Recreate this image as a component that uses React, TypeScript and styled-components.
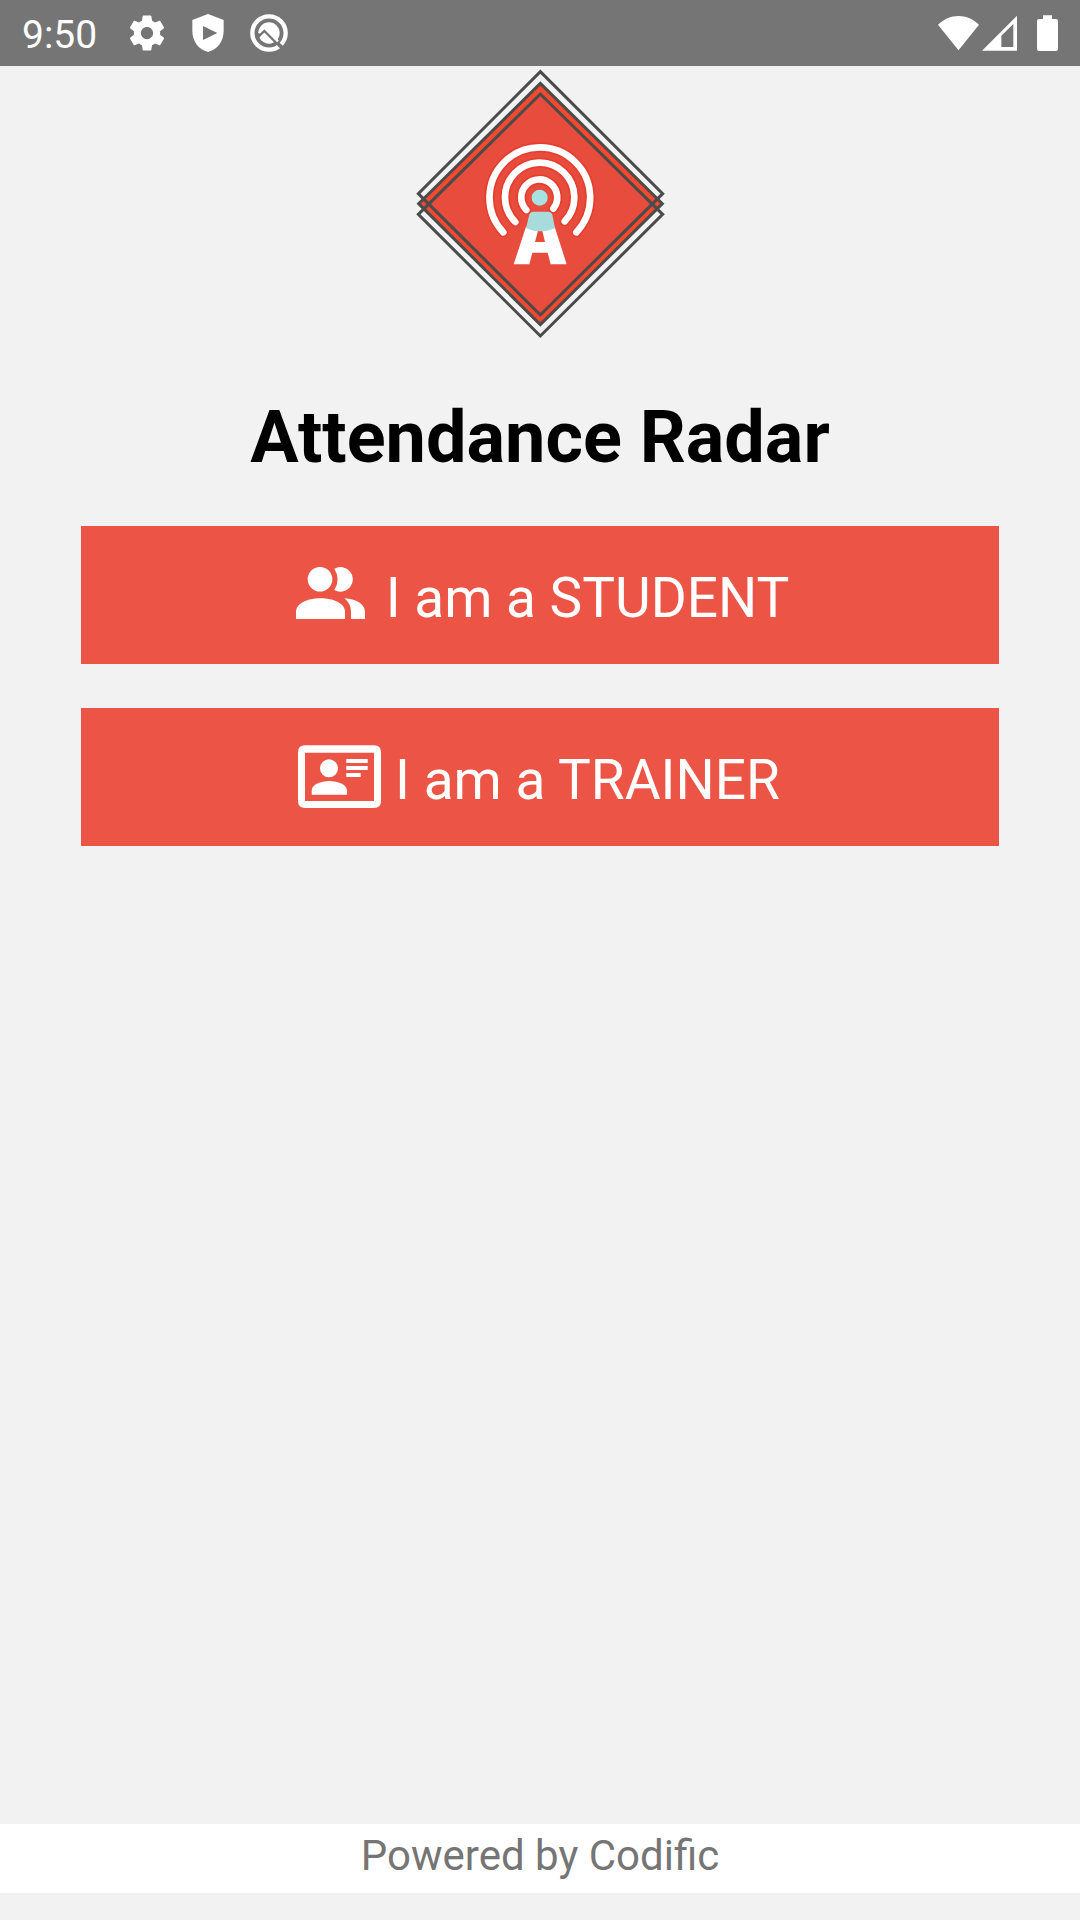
import React from "react";
import styled, { createGlobalStyle } from "styled-components";

const GlobalStyle = createGlobalStyle`
  * { box-sizing: border-box; }
  body {
    margin: 0;
    background: #f2f2f2;
    font-family: Roboto, "Noto Sans", sans-serif;
  }
`;

const Screen = styled.div`
  display: flex;
  flex-direction: column;
  min-height: 100vh;
  background: #f2f2f2;
`;

const StatusBar = styled.header`
  display: flex;
  align-items: center;
  justify-content: space-between;
  height: 66px;
  padding: 0 22px;
  background: #757575;
  color: #ffffff;
`;

const StatusGroup = styled.div<{ $gap: number }>`
  display: flex;
  align-items: center;
  gap: ${(p) => p.$gap}px;
`;

const Clock = styled.time`
  padding-top: 3px;
  font-size: 39px;
  line-height: 46px;
`;

const Icon = styled.svg`
  display: block;
  flex: none;
  fill: currentColor;
`;

const Main = styled.main`
  display: flex;
  flex-direction: column;
  align-items: center;
  padding: 0 7.5%;
`;

const Title = styled.h1`
  margin: 56px 0 46px;
  font-size: 72px;
  line-height: 84px;
  font-weight: 700;
  color: #000000;
  text-align: center;
`;

const Actions = styled.div`
  display: flex;
  flex-direction: column;
  gap: 44px;
  width: 100%;
`;

const RoleButton = styled.button`
  display: flex;
  align-items: center;
  justify-content: center;
  gap: 14px;
  width: 100%;
  padding: 36px 2px 30px 0;
  border: 0;
  background: #ec5545;
  color: #ffffff;
  font-family: inherit;
  font-size: 55px;
  line-height: 64px;
  cursor: pointer;
`;

const Footer = styled.footer`
  margin: auto 0 27px;
  padding: 7px 0 12px;
  background: #ffffff;
  color: #757575;
  font-size: 42px;
  line-height: 50px;
  text-align: center;
`;

const GearIcon = () => (
  <Icon width="42" height="42" viewBox="0 0 24 24" aria-hidden="true">
    <path d="M19.43 12.98c.04-.32.07-.64.07-.98s-.03-.66-.07-.98l2.11-1.65c.19-.15.24-.42.12-.64l-2-3.46c-.12-.22-.39-.3-.61-.22l-2.49 1c-.52-.4-1.08-.73-1.69-.98l-.38-2.65C14.46 2.18 14.25 2 14 2h-4c-.25 0-.46.18-.49.42l-.38 2.65c-.61.25-1.17.59-1.69.98l-2.49-1c-.23-.09-.49 0-.61.22l-2 3.46c-.13.22-.07.49.12.64l2.11 1.65c-.04.32-.07.65-.07.98s.03.66.07.98l-2.11 1.65c-.19.15-.24.42-.12.64l2 3.46c.12.22.39.3.61.22l2.49-1c.52.4 1.08.73 1.69.98l.38 2.65c.03.24.24.42.49.42h4c.25 0 .46-.18.49-.42l.38-2.65c.61-.25 1.17-.59 1.69-.98l2.49 1c.23.09.49 0 .61-.22l2-3.46c.12-.22.07-.49-.12-.64l-2.11-1.65zM12 15.500c-1.93 0-3.500-1.57-3.500-3.500s1.57-3.500 3.500-3.500 3.500 1.57 3.500 3.500-1.57 3.500-3.500 3.500z" />
  </Icon>
);

const ShieldIcon = () => (
  <Icon width="42" height="42" viewBox="0 0 126 126" aria-hidden="true">
    <path
      fillRule="evenodd"
      d="M63 6L110 24V56C110 90 90 112 63 120C36 112 16 90 16 56V24ZM48 42V84L91 63Z"
    />
  </Icon>
);

const CompassIcon = () => (
  <Icon width="42" height="42" viewBox="0 0 126 126" aria-hidden="true">
    <circle cx="63" cy="63" r="50" fill="none" stroke="currentColor" strokeWidth="13" />
    <circle cx="63" cy="63" r="32" />
    <path d="M28 75L49 54L111 116" fill="none" stroke="#757575" strokeWidth="11" />
    <path d="M33 63L49 47L90 88" fill="none" stroke="currentColor" strokeWidth="7" />
  </Icon>
);

const WifiIcon = () => (
  <Icon width="41" height="36" viewBox="0 0 123 108" aria-hidden="true">
    <path d="M0 29C18 13 38 3 61.500 3S105 13 123 29L61.500 106Z" />
  </Icon>
);

const SignalIcon = () => (
  <Icon width="35" height="36" viewBox="0 0 105 108" aria-hidden="true">
    <path fillRule="evenodd" d="M0 107L105 2V107ZM58 62V96H94V27Z" />
  </Icon>
);

const BatteryIcon = () => (
  <Icon width="21" height="36" viewBox="0 0 63 108" aria-hidden="true">
    <path d="M18 1H45V12H57Q63 12 63 18V102Q63 108 57 108H6Q0 108 0 102V18Q0 12 6 12H18Z" />
  </Icon>
);

const StudentsIcon = () => (
  <Icon width="83" height="72" viewBox="1 0 83 72" aria-hidden="true">
    <circle cx="32" cy="17.300" r="12.300" />
    <path d="M46.300 6.800A12.300 12.300 0 1 1 46.300 27.900Q53 17.300 46.300 6.800Z" />
    <path d="M8 57V50C8 41 20 36.300 32.500 36.300S57 41 57 50V57Z" />
    <path d="M56.300 36.300C68 36.800 77 42 77 50V57H63V50C63 44 60.500 39.500 56.300 36.300Z" />
  </Icon>
);

const BadgeIcon = () => (
  <Icon width="83" height="72" viewBox="0 0 83 72" aria-hidden="true">
    <path
      fillRule="evenodd"
      d="M7 1.300H76Q83 1.300 83 8.300V57Q83 64 76 64H7Q0 64 0 57V8.300Q0 1.300 7 1.300ZM7 8.700V57H76V8.700Z"
    />
    <circle cx="31" cy="24.300" r="9" />
    <path d="M13.700 50.700V46.500C13.700 40.500 23 37 31.300 37S49 40.500 49 46.500V50.700Z" />
    <path d="M48.300 15H69.700V19H48.300ZM48.300 22H69.700V26H48.300ZM48.300 29H62.700V33H48.300Z" />
  </Icon>
);

const Logo = () => (
  <Icon width="260" height="274" viewBox="0 18 780 822" role="img" aria-label="Attendance Radar logo">
    <path d="M391 70L757 431L391 794L26 431Z" fill="#e74c3c" />
    <path d="M391 88L739 431L391 777L44 431Z" fill="none" stroke="#f4492f" strokeWidth="20" />
    <g fill="none" stroke="#4b4b4b" strokeWidth="9">
      <path d="M391 35L758 401L391 765L25 401Z" />
      <path d="M391 70L757 431L391 794L26 431Z" />
      <path d="M391 102L758 463L391 828L25 463Z" />
    </g>
    <g fill="none" stroke="#e5301f" strokeOpacity="0.5" strokeWidth="30" strokeLinecap="round">
      <path d="M280 517A151 151 0 1 1 499 517" />
      <path d="M316 486A104 104 0 1 1 464 484" />
      <path d="M349 450A54 54 0 1 1 430 446" />
    </g>
    <g fill="none" stroke="#ffffff" strokeWidth="20" strokeLinecap="round">
      <path d="M280 517A151 151 0 1 1 499 517" />
      <path d="M316 486A104 104 0 1 1 464 484" />
      <path d="M349 450A54 54 0 1 1 430 446" />
    </g>
    <circle cx="389" cy="413" r="24" fill="#a5e2e1" />
    <path
      fill="#ffffff"
      fillRule="evenodd"
      d="M348 500L311 613H358L367 578H413L422 613H470L434 500ZM375 546L384 512H397L405 546Z"
    />
    <path
      fill="#a8dcdc"
      d="M370 455H414Q424 455 427 464L435 505Q414 514 391 514T348 505L358 464Q361 455 370 455Z"
    />
  </Icon>
);

export default function App() {
  return (
    <>
      <GlobalStyle />
      <Screen>
        <StatusBar>
          <StatusGroup $gap={29}>
            <Clock>9:50</Clock>
            <StatusGroup $gap={19}>
              <GearIcon />
              <ShieldIcon />
              <CompassIcon />
            </StatusGroup>
          </StatusGroup>
          <StatusGroup $gap={20}>
            <StatusGroup $gap={3}>
              <WifiIcon />
              <SignalIcon />
            </StatusGroup>
            <BatteryIcon />
          </StatusGroup>
        </StatusBar>
        <Main>
          <Logo />
          <Title>Attendance Radar</Title>
          <Actions>
            <RoleButton type="button">
              <StudentsIcon />
              <span>I am a STUDENT</span>
            </RoleButton>
            <RoleButton type="button">
              <BadgeIcon />
              <span>I am a TRAINER</span>
            </RoleButton>
          </Actions>
        </Main>
        <Footer>Powered by Codific</Footer>
      </Screen>
    </>
  );
}
